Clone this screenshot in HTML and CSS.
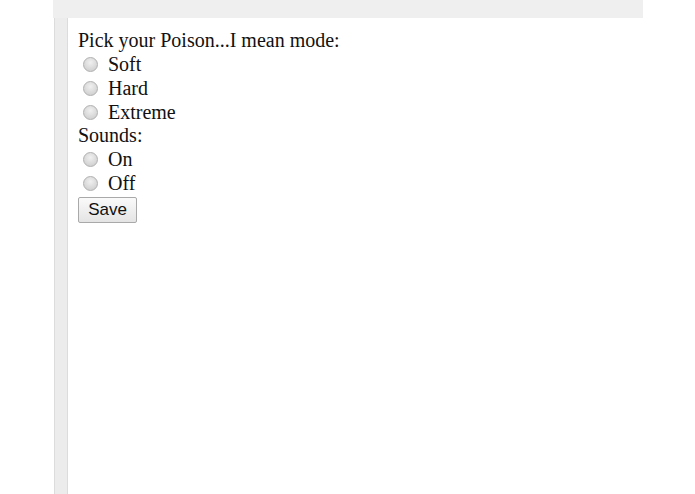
FILE: index.html
```html
<!DOCTYPE html>
<html>
<head>
<meta charset="utf-8">
<link rel="stylesheet" href="styles.css">
</head>
<body>
<div class="topbar"></div>
<div class="frame">
  <div class="sidebar"></div>
  <form class="settings">
    <div class="label">Pick your Poison...I mean mode:</div>
    <label class="opt"><input type="radio" name="mode"> Soft</label>
    <label class="opt"><input type="radio" name="mode"> Hard</label>
    <label class="opt"><input type="radio" name="mode"> Extreme</label>
    <div class="label">Sounds:</div>
    <label class="opt"><input type="radio" name="sound"> On</label>
    <label class="opt"><input type="radio" name="sound"> Off</label>
    <button type="button" class="save">Save</button>
  </form>
</div>
</body>
</html>
```
FILE: styles.css
```css
html, body {
  margin: 0;
  padding: 0;
  background: #ffffff;
}
body {
  font-family: "Liberation Serif", "Times New Roman", serif;
  font-size: 20px;
  color: #111111;
  height: 494px;
  overflow: hidden;
}
.topbar {
  margin-left: 53px;
  width: 590px;
  height: 18px;
  background: #efefef;
}
.frame {
  display: flex;
  margin-left: 54px;
  height: 476px;
}
.sidebar {
  width: 14px;
  background: #ececec;
  border-left: 1px solid #dcdcdc;
  border-right: 1px solid #dcdcdc;
  box-sizing: border-box;
}
.settings {
  padding: 11px 0 0 10px;
  display: flex;
  flex-direction: column;
  align-items: flex-start;
}
.label {
  line-height: 23px;
}
.opt {
  display: flex;
  align-items: center;
  height: 24px;
  line-height: 24px;
}
.opt input {
  -webkit-appearance: none;
  appearance: none;
  width: 15px;
  height: 15px;
  margin: 0 10px 0 5px;
  border-radius: 50%;
  border: 1px solid #b0b0b0;
  background: radial-gradient(circle at 50% 35%, #f0f0f0 0%, #d8d8d8 60%, #c8c8c8 100%);
  box-sizing: border-box;
}
.save {
  margin-top: 2px;
  font-family: "Liberation Sans", Arial, sans-serif;
  font-size: 17px;
  color: #111;
  height: 26px;
  width: 59px;
  padding: 0;
  border: 1px solid #a9a9a9;
  border-radius: 2px;
  background: linear-gradient(#fafafa, #e4e4e4);
}
```
